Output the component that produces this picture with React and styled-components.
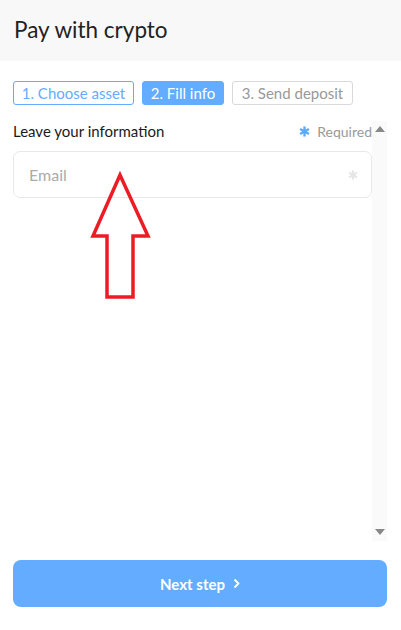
import React from "react";
import styled, { createGlobalStyle } from "styled-components";

const Global = createGlobalStyle`
  html, body { margin: 0; padding: 0; background: #fff; }
  body { font-family: Lato, "Noto Sans", sans-serif; }
  * { box-sizing: border-box; }
`;

const Page = styled.div`
  position: relative;
  width: 401px;
  height: 630px;
  display: flex;
  flex-direction: column;
  background: #fff;
`;

const Header = styled.div`
  height: 61px;
  background: #f8f8f8;
  display: flex;
  align-items: center;
  padding: 0 14px 2px;
  font-size: 22.5px;
  color: #222;
`;

const Steps = styled.div`
  display: flex;
  gap: 8px;
  margin: 20px 13px 0;
  height: 24px;
`;

const Step = styled.div`
  display: flex;
  align-items: center;
  justify-content: center;
  width: ${(p) => p.$w}px;
  height: 24px;
  border-radius: 3px;
  font-size: 15px;
  border: 1px solid ${(p) => (p.$state === "todo" ? "#d9d9d9" : "#63acff")};
  background: ${(p) => (p.$state === "active" ? "#63acff" : "#fff")};
  color: ${(p) => (p.$state === "done" ? "#63acff" : p.$state === "active" ? "#fff" : "#999")};
`;

const ScrollArea = styled.div`
  display: flex;
  margin: 16px 14px 0 13px;
  height: 420px;
`;

const Content = styled.div`
  flex: 1;
  min-width: 0;
  overflow: hidden;
`;

const ScrollBar = styled.div`
  width: 15px;
  background: #fafafa;
  display: flex;
  flex-direction: column;
  justify-content: space-between;
  align-items: center;
  padding: 5px 0 6px;
`;

const ScrollArrow = styled.div`
  width: 0;
  height: 0;
  border-left: 5px solid transparent;
  border-right: 5px solid transparent;
  ${(p) => (p.$down ? "border-top: 6px solid #888;" : "border-bottom: 6px solid #888;")}
`;

const LabelRow = styled.div`
  display: flex;
  justify-content: space-between;
  align-items: center;
  height: 20px;
  margin-bottom: 10px;
`;

const Label = styled.div`
  font-size: 15px;
  color: #1a1a1a;
`;

const Required = styled.div`
  display: flex;
  align-items: center;
  gap: 7px;
  font-size: 14px;
  color: #999;
`;

const Input = styled.div`
  height: 47px;
  border: 1px solid #e8e8e8;
  border-radius: 7px;
  display: flex;
  align-items: center;
  justify-content: space-between;
  padding: 0 13px 0 15px;
  font-size: 16px;
  color: #aaa;
`;

const Footer = styled.div`
  padding: 19px 14px 0 13px;
`;

const Button = styled.button`
  width: 100%;
  height: 47px;
  border: none;
  border-radius: 8px;
  background: #63acff;
  color: #fff;
  font-family: inherit;
  font-weight: 700;
  font-size: 15px;
  display: flex;
  align-items: center;
  justify-content: center;
  gap: 8px;
  padding: 0;
`;

const Arrow = styled.svg`
  position: absolute;
  left: 0;
  top: 0;
  pointer-events: none;
`;

const Star = ({ color, size = 11 }) => (
  <svg width={size} height={size} viewBox="0 0 12 12">
    <g stroke={color} strokeWidth="2.6" strokeLinecap="butt">
      <line x1="6" y1="0.5" x2="6" y2="11.5" />
      <line x1="1.2" y1="3.2" x2="10.8" y2="8.8" />
      <line x1="1.2" y1="8.8" x2="10.8" y2="3.2" />
    </g>
  </svg>
);

export default function App() {
  return (
    <Page>
      <Global />
      <Header>Pay with crypto</Header>
      <Steps>
        <Step $state="done" $w={121}>1. Choose asset</Step>
        <Step $state="active" $w={82}>2. Fill info</Step>
        <Step $state="todo" $w={121}>3. Send deposit</Step>
      </Steps>
      <ScrollArea>
        <Content>
          <LabelRow>
            <Label>Leave your information</Label>
            <Required>
              <Star color="#5aa9ff" />
              Required
            </Required>
          </LabelRow>
          <Input>
            Email
            <Star color="#e6e6e6" size={10} />
          </Input>
        </Content>
        <ScrollBar>
          <ScrollArrow />
          <ScrollArrow $down />
        </ScrollBar>
      </ScrollArea>
      <Footer>
        <Button>
          Next step
          <svg width="7" height="11" viewBox="0 0 7 11">
            <polyline points="1.5,1.5 5.5,5.5 1.5,9.5" fill="none" stroke="#fff" strokeWidth="1.8" />
          </svg>
        </Button>
      </Footer>
      <Arrow width="401" height="630">
        <polygon
          points="120,175 93,236 107,236 107,297 133,297 133,236 148,236"
          fill="none"
          stroke="#ed1c24"
          strokeWidth="3.5"
          strokeLinejoin="miter"
        />
      </Arrow>
    </Page>
  );
}
